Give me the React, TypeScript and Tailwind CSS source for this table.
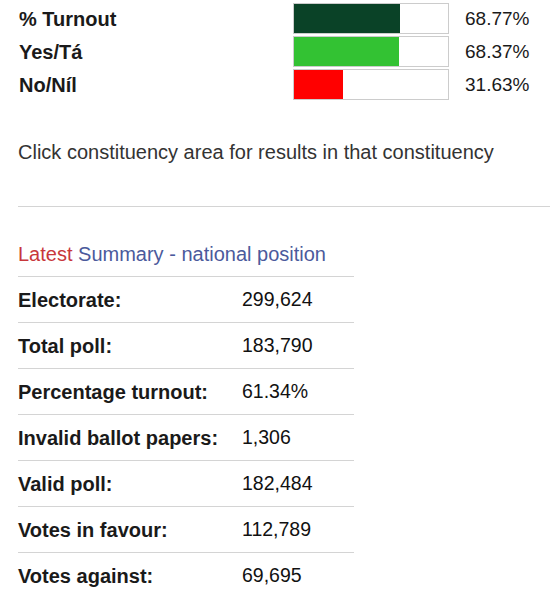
import React from "react";

type Bar = { label: string; pct: number; color: string };

const bars: Bar[] = [
  { label: "% Turnout", pct: 68.77, color: "bg-[#0a4227]" },
  { label: "Yes/Tá", pct: 68.37, color: "bg-[#33c233]" },
  { label: "No/Níl", pct: 31.63, color: "bg-[#ff0000]" },
];

const summary: [string, string][] = [
  ["Electorate:", "299,624"],
  ["Total poll:", "183,790"],
  ["Percentage turnout:", "61.34%"],
  ["Invalid ballot papers:", "1,306"],
  ["Valid poll:", "182,484"],
  ["Votes in favour:", "112,789"],
  ["Votes against:", "69,695"],
];

export default function App() {
  return (
    <div className="w-[550px] h-[592px] overflow-hidden bg-white font-['Liberation_Sans',Arial,sans-serif] text-[#1a1a1a]">
      {/* result bars */}
      <div className="flex flex-col gap-[2px] pt-[3px] pl-[19px]">
        {bars.map((b) => (
          <div key={b.label} className="flex items-center h-[31px]">
            <span className="w-[274px] text-[20px] font-bold leading-none">{b.label}</span>
            <div className="w-[156px] h-full border border-[#cccccc] bg-white">
              <div className={`h-full ${b.color}`} style={{ width: `${b.pct}%` }} />
            </div>
            <span className="ml-[16px] text-[19px] leading-none">{b.pct.toFixed(2)}%</span>
          </div>
        ))}
      </div>

      <p className="mt-[40px] pl-[18px] text-[20px] leading-[24px] text-[#333]">
        Click constituency area for results in that constituency
      </p>

      <div className="ml-[18px] mt-[42px] border-t border-[#d4d4d4]" />

      <div className="pl-[18px] mt-[35px] w-[354px]">
        <h3 className="text-[20px] leading-[24px] h-[24px] whitespace-nowrap">
          <span className="text-[#c8373b]">Latest</span>{" "}
          <span className="text-[#4b5a9c]">Summary - national position</span>
        </h3>
        <div className="mt-[10px] border-t border-[#d4d4d4]">
          {summary.map(([k, v]) => (
            <div key={k} className="flex items-center h-[46px] border-b border-[#d4d4d4]">
              <span className="w-[224px] shrink-0 text-[20px] font-bold whitespace-nowrap">{k}</span>
              <span className="text-[19.5px] text-[#111]">{v}</span>
            </div>
          ))}
        </div>
      </div>
    </div>
  );
}
